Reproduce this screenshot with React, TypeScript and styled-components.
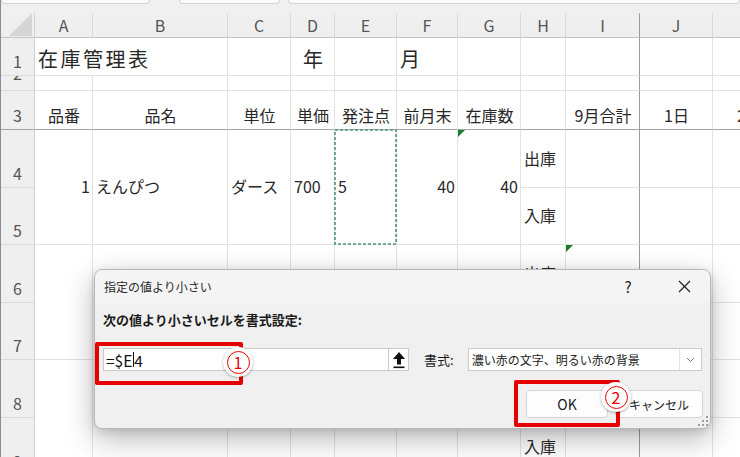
import React from 'react';
import styled, { createGlobalStyle } from 'styled-components';

const FONT = `"Noto Sans CJK JP", "Noto Sans", sans-serif`;

const GlobalStyle = createGlobalStyle`
  html, body { margin: 0; padding: 0; background: #fff; }
  body { font-family: ${FONT}; }
`;

const COLS = [34, 58, 135, 63, 44, 62, 61, 63, 45, 74, 73, 73];
const ROWS = [25, 38, 15, 39, 58, 57, 58, 57, 58, 58];
const LETTERS = ['A', 'B', 'C', 'D', 'E', 'F', 'G', 'H', 'I', 'J', 'K'];
const HEADER_LETTERS = ['A', 'B', 'C', 'D', 'E', 'F', 'G', 'H', 'I', 'J', ''];

const Screen = styled.div`
  position: relative;
  width: 740px;
  height: 457px;
  overflow: hidden;
  background: #fff;
  border-left: 1px solid #8c8c8c;
  box-sizing: border-box;
`;

const TopStrip = styled.div`
  height: 13px;
  background: #f0f0f0;
  display: flex;
  align-items: flex-start;
`;

const StripBox = styled.div<{ $w?: number; $ml: number }>`
  height: 3px;
  margin-left: ${(p) => p.$ml}px;
  ${(p) => (p.$w ? `width: ${p.$w}px;` : 'flex: 1;')}
  background: #fbfbfb;
  border: 1px solid #d2d2d2;
  border-top: none;
  border-radius: 0 0 4px 4px;
`;

const Sheet = styled.div`
  display: grid;
  grid-template-columns: ${COLS.map((c) => `${c}px`).join(' ')};
  grid-template-rows: ${ROWS.map((r) => `${r}px`).join(' ')};
  font-family: ${FONT};
`;

const Corner = styled.div`
  grid-column: 1;
  grid-row: 1;
  background: #efefef;
  border-right: 1px solid #d4d4d4;
  border-bottom: 1px solid #c4c4c4;
  box-sizing: border-box;
  display: flex;
  align-items: flex-end;
  justify-content: flex-end;
  padding: 0 1px 1px 0;
`;

const ColHeader = styled.div<{ $c: number; $freeze?: boolean }>`
  grid-column: ${(p) => p.$c};
  grid-row: 1;
  background: #efefef;
  border-right: 1px solid ${(p) => (p.$freeze ? '#9c9c9c' : '#d8d8d8')};
  border-bottom: 1px solid #c4c4c4;
  box-sizing: border-box;
  display: flex;
  align-items: center;
  justify-content: center;
  font-size: 16px;
  color: #555;
  line-height: 20px;
`;

const RowHeader = styled.div<{ $r: number; $pb: number; $freeze?: boolean }>`
  grid-column: 1;
  grid-row: ${(p) => p.$r};
  background: #efefef;
  border-right: 1px solid #cfcfcf;
  border-bottom: 1px solid ${(p) => (p.$freeze ? '#a4a4a4' : '#dadada')};
  box-sizing: border-box;
  display: flex;
  align-items: flex-end;
  justify-content: center;
  padding-bottom: ${(p) => p.$pb}px;
  overflow: hidden;
  font-size: 16px;
  line-height: 20px;
  color: #555;
`;

type HAlign = 'left' | 'center' | 'right';

const Cell = styled.div<{
  $c: number;
  $r: number;
  $rs: number;
  $cs: number;
  $h: HAlign;
  $v: 'end' | 'center';
  $size: number;
  $spacing: number;
  $freezeR?: boolean;
  $freezeB?: boolean;
}>`
  grid-column: ${(p) => p.$c} / span ${(p) => p.$cs};
  grid-row: ${(p) => p.$r} / span ${(p) => p.$rs};
  position: relative;
  box-sizing: border-box;
  border-right: 1px solid ${(p) => (p.$freezeR ? '#9c9c9c' : '#e2e2e2')};
  border-bottom: 1px solid ${(p) => (p.$freezeB ? '#a4a4a4' : '#e2e2e2')};
  display: flex;
  justify-content: ${(p) => (p.$h === 'left' ? 'flex-start' : p.$h === 'right' ? 'flex-end' : 'center')};
  align-items: ${(p) => (p.$v === 'end' ? 'flex-end' : 'center')};
  padding: 0 2px ${(p) => (p.$v === 'end' ? 4 : 0)}px 3px;
  font-size: ${(p) => p.$size}px;
  letter-spacing: ${(p) => p.$spacing}px;
  line-height: 1.2;
  color: #272727;
  white-space: nowrap;
`;

const Flag = styled.svg`
  position: absolute;
  left: 0;
  top: 0;
`;

const Marquee = styled.svg`
  position: absolute;
  left: -1px;
  top: -1px;
  overflow: visible;
`;

type Spec = { text?: string; h?: HAlign; size?: number; spacing?: number; mark?: 'marquee' | 'flag' };

const content: Record<string, Spec> = {
  A1: { text: '在庫管理表', size: 20, spacing: 2.5 },
  D1: { text: '年', h: 'center', size: 20 },
  F1: { text: '月', size: 20 },
  A3: { text: '品番', h: 'center' },
  B3: { text: '品名', h: 'center' },
  C3: { text: '単位', h: 'center' },
  D3: { text: '単価', h: 'center' },
  E3: { text: '発注点', h: 'center' },
  F3: { text: '前月末', h: 'center' },
  G3: { text: '在庫数', h: 'center' },
  I3: { text: '9月合計', h: 'center' },
  J3: { text: '1日', h: 'center' },
  K3: { text: '2日', h: 'center' },
  A4: { text: '1', h: 'right' },
  B4: { text: 'えんぴつ' },
  C4: { text: 'ダース' },
  D4: { text: '700' },
  E4: { text: '5', mark: 'marquee' },
  F4: { text: '40', h: 'right' },
  G4: { text: '40', h: 'right', mark: 'flag' },
  H4: { text: '出庫' },
  H5: { text: '入庫' },
  H6: { text: '出庫' },
  I6: { mark: 'flag' },
  H7: { text: '入庫' },
  H8: { text: '出庫' },
  H9: { text: '入庫' },
};

const mergedPairs = [4, 6, 8];

function buildCells() {
  const out: React.ReactNode[] = [];
  for (let r = 1; r <= 9; r++) {
    for (let ci = 0; ci < LETTERS.length; ci++) {
      const letter = LETTERS[ci];
      if (r === 1 && letter === 'B') continue;
      const isPairCol = ci <= 6;
      if (isPairCol && mergedPairs.includes(r - 1)) continue;
      const rs = isPairCol && mergedPairs.includes(r) ? 2 : 1;
      const cs = r === 1 && letter === 'A' ? 2 : 1;
      const spec = content[`${letter}${r}`] || {};
      const v = r <= 3 ? 'end' : 'center';
      out.push(
        <Cell
          key={`${letter}${r}`}
          $c={ci + 2}
          $r={r + 1}
          $rs={rs}
          $cs={cs}
          $h={spec.h || 'left'}
          $v={v}
          $size={spec.size || 16}
          $spacing={spec.spacing || 0}
          $freezeR={letter === 'I'}
          $freezeB={r === 3}
        >
          {spec.mark === 'flag' && (
            <Flag width="8" height="8" viewBox="0 0 8 8">
              <polygon points="0,0 7,0 0,7" fill="#1c7c2e" />
            </Flag>
          )}
          {spec.mark === 'marquee' && (
            <Marquee width="63" height="116" viewBox="0 0 63 116">
              <rect x="1" y="1" width="61" height="114" fill="none" stroke="#4d9470" strokeWidth="1.6" strokeDasharray="3 2" />
            </Marquee>
          )}
          {spec.text}
        </Cell>
      );
    }
  }
  return out;
}

/* ---------- Dialog ---------- */

const Dialog = styled.div`
  position: absolute;
  left: 93px;
  top: 269px;
  width: 617px;
  height: 160px;
  box-sizing: border-box;
  background: #f0f0f0;
  border: 1px solid #b8b8b8;
  border-radius: 8px;
  box-shadow: 0 10px 30px rgba(0, 0, 0, 0.28), 0 2px 8px rgba(0, 0, 0, 0.12);
  display: flex;
  flex-direction: column;
  font-family: ${FONT};
  color: #1b1b1b;
`;

const TitleBar = styled.div`
  height: 33px;
  display: flex;
  align-items: center;
  padding-left: 9px;
  background: #f4f4f4;
  border-radius: 8px 8px 0 0;
`;

const Title = styled.div`
  flex: 1;
  font-size: 12px;
  color: #2a2a2a;
`;

const TitleButton = styled.div<{ $w: number }>`
  width: ${(p) => p.$w}px;
  height: 100%;
  display: flex;
  align-items: center;
  justify-content: center;
  font-size: 15px;
  color: #222;
`;

const Body = styled.div`
  flex: 1;
  display: flex;
  flex-direction: column;
  padding: 8px 6px 10px 8px;
`;

const Prompt = styled.div`
  font-size: 13px;
  font-weight: 700;
  line-height: 18px;
  height: 18px;
`;

const InputRow = styled.div`
  margin-top: 19px;
  display: flex;
  align-items: center;
  height: 23px;
`;

const RefField = styled.div`
  width: 306px;
  height: 23px;
  box-sizing: border-box;
  display: flex;
  background: #fff;
  border: 1px solid #cbcbcb;
`;

const RefText = styled.div`
  flex: 1;
  display: flex;
  align-items: center;
  padding-left: 2px;
  font-size: 15.5px;
  color: #111;
`;

const Caret = styled.span`
  display: inline-block;
  width: 1px;
  height: 15px;
  background: #111;
  margin: 0 0.5px;
`;

const CollapseButton = styled.div`
  width: 20px;
  box-sizing: border-box;
  border-left: 1px solid #cbcbcb;
  background: #fff;
  display: flex;
  align-items: center;
  justify-content: center;
`;

const FieldLabel = styled.div`
  margin: 0 14px 0 15px;
  font-size: 13px;
  white-space: nowrap;
`;

const Select = styled.div`
  width: 234px;
  height: 23px;
  box-sizing: border-box;
  display: flex;
  background: #fff;
  border: 1px solid #cbcbcb;
`;

const SelectText = styled.div`
  flex: 1;
  display: flex;
  align-items: center;
  padding-left: 3px;
  font-size: 12px;
  color: #1b1b1b;
  white-space: nowrap;
`;

const SelectArrow = styled.div`
  width: 21px;
  border-left: 1px solid #e3e3e3;
  display: flex;
  align-items: center;
  justify-content: center;
`;

const ButtonRow = styled.div`
  margin-top: 19px;
  display: flex;
  justify-content: flex-end;
  gap: 7px;
  padding-right: 1px;
`;

const Button = styled.div<{ $w: number; $size: number }>`
  width: ${(p) => p.$w}px;
  height: 28px;
  box-sizing: border-box;
  background: #fdfdfd;
  border: 1px solid #d3d3d3;
  border-radius: 4px;
  display: flex;
  align-items: center;
  justify-content: center;
  font-size: ${(p) => p.$size}px;
  color: #1b1b1b;
`;

const Grip = styled.svg`
  position: absolute;
  right: 2px;
  bottom: 2px;
`;

/* ---------- Annotations ---------- */

const RedBox = styled.div<{ $x: number; $y: number; $w: number; $h: number }>`
  position: absolute;
  left: ${(p) => p.$x}px;
  top: ${(p) => p.$y}px;
  width: ${(p) => p.$w}px;
  height: ${(p) => p.$h}px;
  box-sizing: border-box;
  border: 4px solid #e60000;
  border-radius: 2px;
`;

const Badge = styled.div<{ $cx: number; $cy: number }>`
  position: absolute;
  left: ${(p) => p.$cx - 15}px;
  top: ${(p) => p.$cy - 15}px;
  width: 30px;
  height: 30px;
  border-radius: 50%;
  background: #fff;
  box-shadow: 0 1px 3px rgba(0, 0, 0, 0.3);
  display: flex;
  align-items: center;
  justify-content: center;
`;

const BadgeRing = styled.div`
  width: 23px;
  height: 23px;
  box-sizing: border-box;
  border: 1.8px solid #e60000;
  border-radius: 50%;
  display: flex;
  align-items: center;
  justify-content: center;
  font-family: ${FONT};
  font-size: 16px;
  line-height: 1;
  color: #e60000;
`;

export default function App() {
  return (
    <>
      <GlobalStyle />
      <Screen>
        <TopStrip>
          <StripBox $ml={0} $w={147} />
          <StripBox $ml={29} $w={99} />
          <StripBox $ml={8} />
        </TopStrip>
        <Sheet>
          <Corner>
            <svg width="24" height="23" viewBox="0 0 24 23">
              <polygon points="23,0 23,23 0,23" fill="#d5d5d5" />
            </svg>
          </Corner>
          {HEADER_LETTERS.map((l, i) => (
            <ColHeader key={i} $c={i + 2} $freeze={l === 'I'}>
              {l}
            </ColHeader>
          ))}
          {[1, 2, 3, 4, 5, 6, 7, 8, 9].map((n) => (
            <RowHeader key={n} $r={n + 1} $pb={n === 2 ? 7 : 4} $freeze={n === 3}>
              {n}
            </RowHeader>
          ))}
          {buildCells()}
        </Sheet>

        <Dialog>
          <TitleBar>
            <Title>指定の値より小さい</Title>
            <TitleButton $w={60}>?</TitleButton>
            <TitleButton $w={52}>
              <svg width="13" height="13" viewBox="0 0 13 13">
                <path d="M1 1 L12 12 M12 1 L1 12" stroke="#222" strokeWidth="1.2" fill="none" />
              </svg>
            </TitleButton>
          </TitleBar>
          <Body>
            <Prompt>次の値より小さいセルを書式設定:</Prompt>
            <InputRow>
              <RefField>
                <RefText>
                  =$E<Caret />4
                </RefText>
                <CollapseButton>
                  <svg width="14" height="18" viewBox="0 0 14 18">
                    <polygon points="7,1 1,8 5,8 5,13.5 9,13.5 9,8 13,8" fill="#111" />
                    <rect x="1.5" y="15.5" width="11" height="1.6" fill="#111" />
                  </svg>
                </CollapseButton>
              </RefField>
              <FieldLabel>書式:</FieldLabel>
              <Select>
                <SelectText>濃い赤の文字、明るい赤の背景</SelectText>
                <SelectArrow>
                  <svg width="9" height="6" viewBox="0 0 9 6">
                    <polyline points="1,1 4.5,4.5 8,1" fill="none" stroke="#777" strokeWidth="1" />
                  </svg>
                </SelectArrow>
              </Select>
            </InputRow>
            <ButtonRow>
              <Button $w={82} $size={14}>OK</Button>
              <Button $w={88} $size={12}>キャンセル</Button>
            </ButtonRow>
          </Body>
          <Grip width="10" height="10" viewBox="0 0 10 10">
            <rect x="8" y="0" width="2" height="2" fill="#a0a0a0" />
            <rect x="4" y="4" width="2" height="2" fill="#a0a0a0" />
            <rect x="8" y="4" width="2" height="2" fill="#a0a0a0" />
            <rect x="0" y="8" width="2" height="2" fill="#a0a0a0" />
            <rect x="4" y="8" width="2" height="2" fill="#a0a0a0" />
            <rect x="8" y="8" width="2" height="2" fill="#a0a0a0" />
          </Grip>
        </Dialog>

        <RedBox $x={94} $y={342} $w={148} $h={43} />
        <RedBox $x={513} $y={380} $w={106} $h={47} />
        <Badge $cx={237} $cy={362}>
          <BadgeRing>1</BadgeRing>
        </Badge>
        <Badge $cx={615} $cy={397}>
          <BadgeRing>2</BadgeRing>
        </Badge>
      </Screen>
    </>
  );
}
